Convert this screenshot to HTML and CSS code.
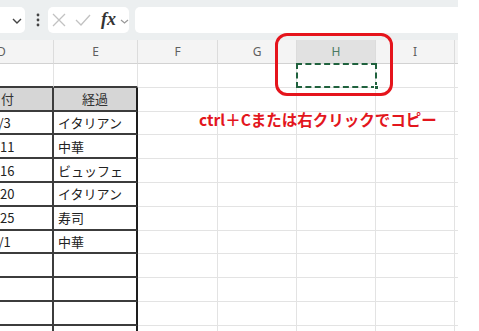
FILE: index.html
```html
<!DOCTYPE html>
<html lang="ja">
<head>
    <meta charset="UTF-8">
    <meta name="viewport" content="width=device-width, initial-scale=1.0">
    <title>コピー</title>
    <link rel="stylesheet" href="styles.css">
</head>
<body>

<div class="window">
    <div class="toolbar">
        <div class="namebox">
            <svg width="10" height="6" viewBox="0 0 10 6"><path d="M1 1 L5 5 L9 1" fill="none" stroke="#444" stroke-width="1.4"/></svg>
        </div>
        <div class="grip">
            <svg width="4" height="14" viewBox="0 0 4 14"><circle cx="2" cy="2" r="1.4" fill="#444"/><circle cx="2" cy="7" r="1.4" fill="#444"/><circle cx="2" cy="12" r="1.4" fill="#444"/></svg>
        </div>
        <div class="fbuttons">
            <svg class="cancel" width="14" height="14" viewBox="0 0 14 14"><path d="M1 1 L13 13 M13 1 L1 13" fill="none" stroke="#c2c2c2" stroke-width="1.3"/></svg>
            <svg class="enter" width="16" height="12" viewBox="0 0 16 12"><path d="M1 6 L6 11 L15 1" fill="none" stroke="#c2c2c2" stroke-width="1.3"/></svg>
            <span class="fx">fx</span>
            <svg class="more" width="9" height="5" viewBox="0 0 9 5"><path d="M1 1 L4.5 4 L8 1" fill="none" stroke="#999" stroke-width="1.2"/></svg>
        </div>
        <div class="finput"></div>
    </div>

    <div class="sheet">
        <div class="row head">
            <div>D</div><div>E</div><div>F</div><div>G</div><div class="sel">H</div><div>I</div><div class="stub"></div>
        </div>
        <div class="row">
            <div class="above"></div><div class="above"></div><div></div><div></div><div></div><div></div><div class="stub"></div>
        </div>
        <div class="row">
            <div class="tb th">日付</div><div class="tb te th">経過</div><div></div><div></div><div></div><div></div><div class="stub"></div>
        </div>
        <div class="row">
            <div class="tb">4/3</div><div class="tb te">イタリアン</div><div></div><div></div><div></div><div></div><div class="stub"></div>
        </div>
        <div class="row">
            <div class="tb">4/11</div><div class="tb te">中華</div><div></div><div></div><div></div><div></div><div class="stub"></div>
        </div>
        <div class="row">
            <div class="tb">4/16</div><div class="tb te">ビュッフェ</div><div></div><div></div><div></div><div></div><div class="stub"></div>
        </div>
        <div class="row">
            <div class="tb">4/20</div><div class="tb te">イタリアン</div><div></div><div></div><div></div><div></div><div class="stub"></div>
        </div>
        <div class="row">
            <div class="tb">4/25</div><div class="tb te">寿司</div><div></div><div></div><div></div><div></div><div class="stub"></div>
        </div>
        <div class="row">
            <div class="tb">5/1</div><div class="tb te">中華</div><div></div><div></div><div></div><div></div><div class="stub"></div>
        </div>
        <div class="row">
            <div class="tb"></div><div class="tb te"></div><div></div><div></div><div></div><div></div><div class="stub"></div>
        </div>
        <div class="row">
            <div class="tb"></div><div class="tb te"></div><div></div><div></div><div></div><div></div><div class="stub"></div>
        </div>
        <div class="row">
            <div class="tb"></div><div class="tb te"></div><div></div><div></div><div></div><div></div><div class="stub"></div>
        </div>
        <div class="row">
            <div class="tb"></div><div class="tb te"></div><div></div><div></div><div></div><div></div><div class="stub"></div>
        </div>
    </div>

    <!-- 注釈 -->
    <div class="callout"></div>
    <div class="marquee"><span class="handle"></span></div>
    <div class="note">ctrl＋Cまたは右クリックでコピー</div>
</div>

</body>
</html>
```

FILE: styles.css
```css
* {
    box-sizing: border-box;
    margin: 0;
    padding: 0;
}
body {
    font-family: "Noto Sans CJK JP", "Noto Sans", sans-serif;
    background-color: #ffffff;
    width: 479px;
    height: 331px;
    overflow: hidden;
}
.window {
    position: relative;
    width: 458px;
    height: 331px;
    overflow: hidden;
}
.toolbar {
    display: flex;
    align-items: center;
    height: 40px;
    padding: 7px 0;
    background-color: #eceff0;
}
.namebox {
    width: 60px;
    height: 26px;
    margin-left: -35px;
    background-color: #fff;
    border-radius: 5px;
    display: flex;
    align-items: center;
    justify-content: flex-end;
    padding-right: 3px;
    padding-top: 2px;
}
.grip {
    width: 23px;
    display: flex;
    justify-content: center;
    padding-left: 2px;
}
.fbuttons {
    width: 81px;
    height: 26px;
    background-color: #fff;
    border-radius: 5px;
    display: flex;
    align-items: center;
    padding-left: 4px;
}
.enter {
    margin-left: 9px;
}
.fx {
    font-family: "Liberation Serif", serif;
    font-style: italic;
    font-weight: bold;
    font-size: 18px;
    color: #333;
    margin-left: 10px;
    line-height: 18px;
    margin-top: -2px;
}
.more {
    margin-left: 4px;
    margin-top: 2px;
}
.finput {
    flex: 1;
    height: 26px;
    margin-left: 6px;
    background-color: #fff;
    border-radius: 5px 0 0 5px;
}
.sheet {
    margin-left: -50px;
}
.row {
    display: grid;
    grid-template-columns: 104px 84px 80px 79px 79px 79px 3px;
    height: 23.8px;
}
.row > div {
    border-right: 1px solid #e3e3e3;
    border-bottom: 1px solid #e3e3e3;
    display: flex;
    align-items: center;
    justify-content: center;
    font-size: 13px;
    color: #222;
}
.row > .stub {
    border-right: none;
}
.row.head {
    height: 24px;
    background-color: #f4f4f4;
}
.row.head > div {
    font-family: "Noto Sans", sans-serif;
    font-size: 12px;
    color: #5f5f5f;
    border-right-color: #dcdcdc;
    border-bottom-color: #d2d2d2;
}
.row.head > .sel {
    background-color: #e1e1e1;
    color: #4a7a62;
}
.row > .above {
    border-bottom: 2px solid #3c3c3c;
}
.row > .tb {
    border-bottom: 2px solid #3c3c3c;
    border-right: 2px solid #3c3c3c;
}
.row > .te {
    justify-content: flex-start;
    padding-left: 4px;
    border-right: 2px solid #1e1e1e;
}
.row > .th {
    background-color: #d6d6d6;
    color: #333;
}
.row > .te.th {
    justify-content: center;
    padding-left: 0;
}
.callout {
    position: absolute;
    left: 275px;
    top: 33px;
    width: 118px;
    height: 63px;
    border: 3px solid #e5141c;
    border-radius: 12px;
}
.marquee {
    position: absolute;
    left: 296px;
    top: 63px;
    width: 81px;
    height: 25px;
    border: 2px dashed #20623e;
}
.handle {
    position: absolute;
    right: -4px;
    bottom: -4px;
    width: 5px;
    height: 5px;
    background-color: #20623e;
    border: 1px solid #fff;
}
.note {
    position: absolute;
    left: 199px;
    top: 110px;
    font-size: 15.5px;
    font-weight: bold;
    line-height: 18px;
    color: #e3161d;
    white-space: nowrap;
}
```
